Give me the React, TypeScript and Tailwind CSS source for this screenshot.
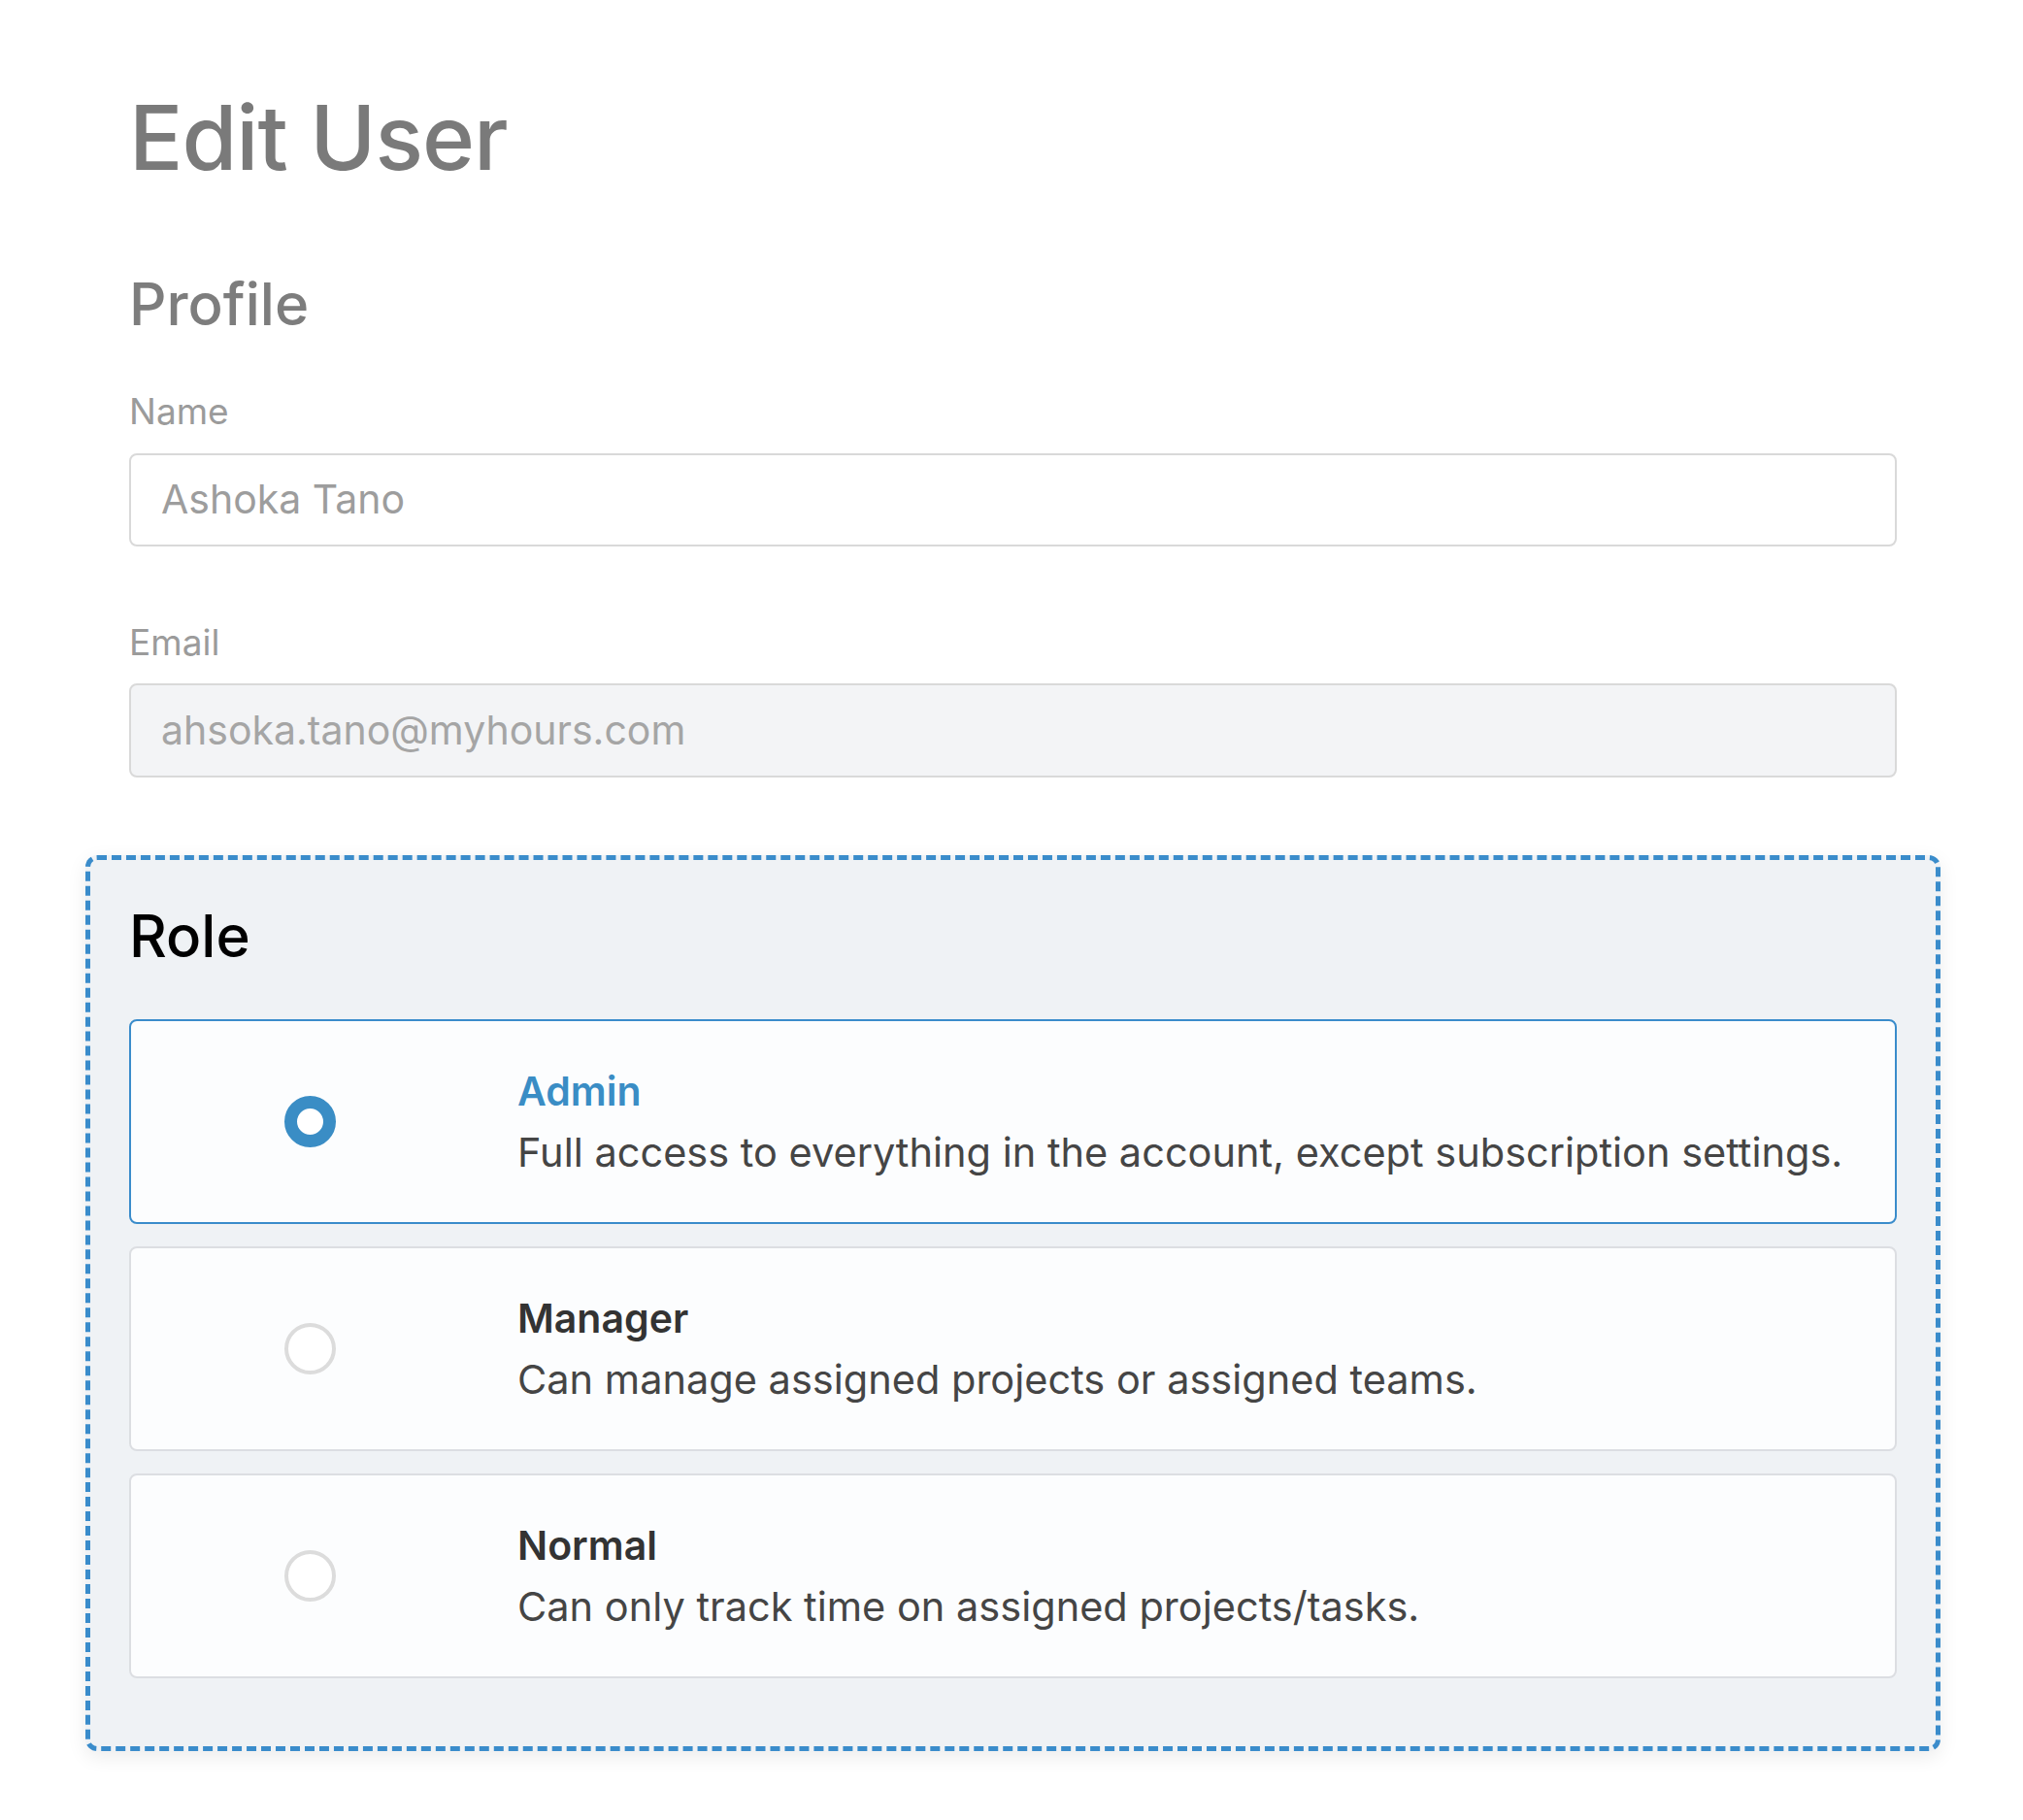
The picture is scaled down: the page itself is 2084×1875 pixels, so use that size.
export default function App() {
  const roles = [
    { t: "Admin", d: "Full access to everything in the account, except subscription settings.", sel: true },
    { t: "Manager", d: "Can manage assigned projects or assigned teams.", sel: false },
    { t: "Normal", d: "Can only track time on assigned projects/tasks.", sel: false },
  ];
  return (
    <div className="min-h-[1875px] w-[2084px] bg-white" style={{ fontFamily: "Inter, 'Noto Sans', sans-serif" }}>
      <div className="ml-[133px] w-[1821px] pt-[93px]">
        <h1 className="text-[92px] leading-[98px] font-medium text-[#7a7a7a] tracking-[-1px]">Edit User</h1>
        <h2 className="mt-[88px] text-[60px] leading-[68px] font-medium text-[#7d7d7d]">Profile</h2>
        <div className="mt-[56px] text-[37px] leading-[42px] text-[#9b9b9b]">Name</div>
        <div className="mt-[22px] h-[96px] flex items-center rounded-[8px] border-2 border-[#d9d9d9] bg-white pl-[31px] text-[41px] text-[#9d9d9d]">Ashoka Tano</div>
        <div className="mt-[78px] text-[37px] leading-[42px] text-[#9b9b9b]">Email</div>
        <div className="mt-[21px] h-[97px] flex items-center rounded-[8px] border-2 border-[#d9d9d9] bg-[#f3f4f6] pl-[31px] text-[41px] text-[#a5a5a5]">ahsoka.tano@myhours.com</div>
        <div className="mt-[80px] -mx-[45px] rounded-[12px] border-[5px] border-dashed border-[#3a8ccb] bg-[#eff2f5] px-[40px] pt-[44px] pb-[70px] shadow-[0_6px_20px_rgba(0,0,0,0.08)]">
          <div className="text-[60px] leading-[68px] font-medium text-black">Role</div>
          <div className="mt-[52px] flex flex-col gap-[23px]">
            {roles.map((r) => (
              <div
                key={r.t}
                className={`h-[211px] flex items-center rounded-[8px] border-2 bg-[#fcfdfe] ${r.sel ? "border-[#3a8ccb]" : "border-[#dcdee2]"}`}
              >
                <div className="ml-[158px] w-[53px] h-[53px] shrink-0">
                  {r.sel ? (
                    <div className="w-[53px] h-[53px] rounded-full border-[13px] border-[#3a8dc5] bg-white" />
                  ) : (
                    <div className="w-[53px] h-[53px] rounded-full border-[4px] border-[#dcdcdc] bg-white" />
                  )}
                </div>
                <div className="ml-[187px] flex flex-col gap-[3px]">
                  <div className={`text-[41px] leading-[60px] font-semibold ${r.sel ? "text-[#3a8dc5]" : "text-[#333]"}`}>{r.t}</div>
                  <div className="text-[41.5px] leading-[60px] text-[#454545]">{r.d}</div>
                </div>
              </div>
            ))}
          </div>
        </div>
      </div>
    </div>
  );
}
